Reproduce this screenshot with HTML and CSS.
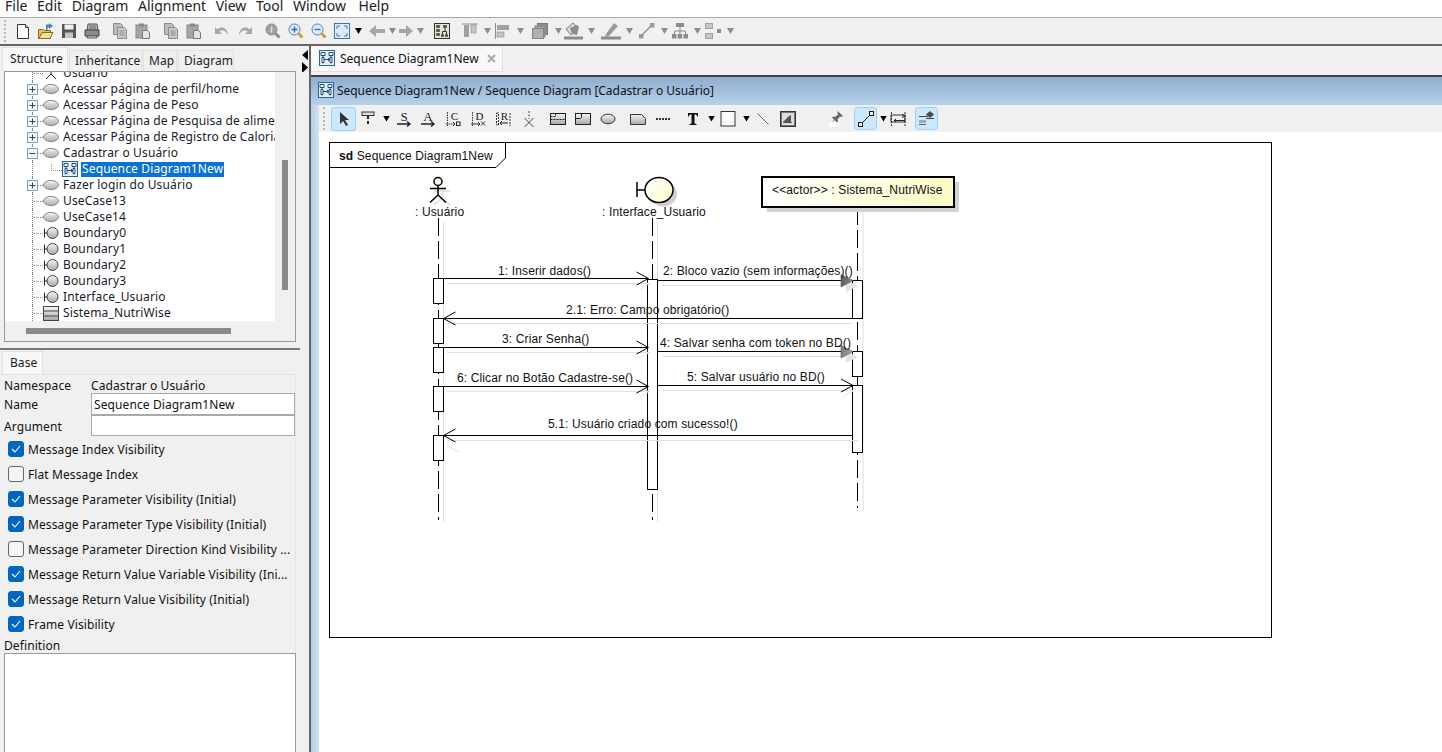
FILE: index.html
```html
<!DOCTYPE html>
<html lang="pt">
<head>
<meta charset="utf-8">
<title>Sequence Diagram1New</title>
<link rel="stylesheet" href="styles.css">
</head>
<body>
<svg class="defs" width="0" height="0">
  <defs>
    <linearGradient id="ug" x1="0" y1="0" x2="0" y2="1"><stop offset="0" stop-color="#f4f4f4"/><stop offset="1" stop-color="#a8a8a8"/></linearGradient>
    <linearGradient id="yel" x1="0" y1="0" x2="1" y2="1"><stop offset="0" stop-color="#ffffff"/><stop offset="1" stop-color="#fbfbc8"/></linearGradient>
    <linearGradient id="yb" x1="0" y1="0" x2="1" y2="0"><stop offset="0" stop-color="#ffffff"/><stop offset="1" stop-color="#fbfbc4"/></linearGradient>
    <linearGradient id="gr" x1="0" y1="0" x2="1" y2="1"><stop offset="0" stop-color="#5c5c5c"/><stop offset="1" stop-color="#a8a8a8"/></linearGradient>
    <symbol id="seq" viewBox="0 0 16 16">
      <rect x=".5" y=".5" width="15" height="15" fill="#e6eff8" stroke="#2d6396"/>
      <path d="M2 2.500h4v3H2zM10 2.500h4v3h-4z" fill="#fff" stroke="#1c4f80"/>
      <path d="M4 5.500v8M12 5.500v8" stroke="#1c4f80"/>
      <path d="M3 7.500h2v5H3zM11 7.500h2v5h-2z" fill="#fff" stroke="#1c4f80"/>
      <path d="M5 9.500h6M9 8l2 1.500L9 11" fill="none" stroke="#1c4f80"/>
    </symbol>
    <symbol id="uc" viewBox="0 0 16 16">
      <ellipse cx="8" cy="8" rx="7.500" ry="4.600" fill="url(#ug)" stroke="#8a8a8a"/>
    </symbol>
    <symbol id="bd" viewBox="0 0 16 16">
      <circle cx="9.500" cy="8" r="5.500" fill="url(#ug)" stroke="#444"/>
      <path d="M1.500 3.500v9M1.500 8H4" stroke="#222" fill="none"/>
    </symbol>
    <symbol id="cl" viewBox="0 0 16 16">
      <rect x=".5" y="1.500" width="15" height="14" fill="url(#ug)" stroke="#444"/>
      <path d="M.5 6h15M.5 11h15" stroke="#444"/>
    </symbol>
    <symbol id="pl" viewBox="0 0 11 11">
      <rect x=".5" y=".5" width="10" height="10" fill="#f2f6fb" stroke="#8aa0bd"/>
      <path d="M2.500 5.500h6M5.500 2.500v6" stroke="#27457a"/>
    </symbol>
    <symbol id="mi" viewBox="0 0 11 11">
      <rect x=".5" y=".5" width="10" height="10" fill="#f2f6fb" stroke="#8aa0bd"/>
      <path d="M2.500 5.500h6" stroke="#27457a"/>
    </symbol>
    <symbol id="pg" viewBox="0 0 16 16">
      <path d="M1.500 .5h7l2 2v9h-9z" fill="#bdbdbd" stroke="#8c8c8c"/>
      <path d="M5.500 4.500h7l2 2v9h-9z" fill="#c8c8c8" stroke="#8c8c8c"/>
      <path d="M7.500 8h5M7.500 10h5M7.500 12h5" stroke="#8c8c8c"/>
    </symbol>
    <symbol id="pt" viewBox="0 0 16 16">
      <rect x="1" y="2" width="11" height="13" fill="#a9a4a0" stroke="#8a8580"/>
      <rect x="4" y=".5" width="5" height="3" fill="#8a8580"/>
      <path d="M7.500 7.500h5l2 2v6h-7z" fill="#e4e4e4" stroke="#777"/>
    </symbol>
  </defs>
</svg>

<div class="app">
  <nav class="menu">
    <span>File</span><span>Edit</span><span>Diagram</span><span>Alignment</span><span>View</span><span>Tool</span><span>Window</span><span>Help</span>
  </nav>

  <div class="toolbar">
    <span class="grip m4"></span>
    <svg class="i m9" width="16" height="16" viewBox="0 0 16 16"><path d="M2.500 1.500h8l3 3v11h-11z" fill="#fdfdfd" stroke="#333"/><path d="M10.500 1.500v3h3" fill="#ddd" stroke="#333"/></svg>
    <svg class="i m7" width="16" height="16" viewBox="0 0 16 16"><path d="M.5 6.500h5l1 1h6v8H.5z" fill="#e8c35a" stroke="#8a6a1a"/><path d="M1 15.500l3-6h11l-3 6z" fill="#f6df8e" stroke="#8a6a1a"/><path d="M8 1.500h3V0l4 3-4 3V4.500H9.500V7H8z" fill="#3d85c6"/></svg>
    <svg class="i m7" width="16" height="16" viewBox="0 0 16 16"><rect x="1" y="1" width="14" height="14" fill="#555"/><rect x="3.500" y="1.500" width="9" height="5" fill="#f0f0f0"/><rect x="4" y="9.500" width="8" height="5.500" fill="#c4c4c4"/></svg>
    <svg class="i m7" width="16" height="16" viewBox="0 0 16 16"><path d="M4 1h9l1 6H3z" fill="#bbb" stroke="#555"/><path d="M1 7h14v6H1z" fill="#8a8a8a" stroke="#444"/><path d="M3 13h10v2H3z" fill="#ddd" stroke="#555"/><path d="M5 3h7M5 5h7" stroke="#666"/></svg>
    <svg class="i m12" width="16" height="16"><use href="#pg"/></svg>
    <svg class="i m7" width="16" height="16"><use href="#pt"/></svg>
    <svg class="i m12" width="16" height="16"><use href="#pg"/></svg>
    <svg class="i m7" width="16" height="16"><use href="#pt"/></svg>
    <svg class="i m12" width="16" height="16" viewBox="0 0 16 16"><path d="M1 4v7h7L5.500 8.500C8 6 11.500 7 14 12c0-6-6-10-10.500-5.500z" fill="#a6a6a6"/></svg>
    <svg class="i m7" width="16" height="16" viewBox="0 0 16 16"><path d="M15 4v7H8l2.500-2.500C8 6 4.500 7 2 12 2 6 8 2 12.500 6.500z" fill="#a6a6a6"/></svg>
    <svg class="i m12" width="16" height="16" viewBox="0 0 16 16"><circle cx="6.500" cy="6.500" r="5.500" fill="#a0a0a0" stroke="#8a8a8a"/><path d="M10.500 10.500l4 4" stroke="#8a8a8a" stroke-width="3"/><path d="M6.500 3.500v6" stroke="#dcdcdc" stroke-width="1.500"/></svg>
    <svg class="i m7" width="16" height="16" viewBox="0 0 16 16"><circle cx="6.500" cy="6.500" r="5.500" fill="#dcecfb" stroke="#5680b0"/><path d="M3.500 6.500h6M6.500 3.500v6" stroke="#2d6aa8" stroke-width="1.300"/><path d="M10.500 10.500l4 4" stroke="#d99a2b" stroke-width="3"/></svg>
    <svg class="i m7" width="16" height="16" viewBox="0 0 16 16"><circle cx="6.500" cy="6.500" r="5.500" fill="#dcecfb" stroke="#5680b0"/><path d="M3.500 6.500h6" stroke="#2d6aa8" stroke-width="1.300"/><path d="M10.500 10.500l4 4" stroke="#d99a2b" stroke-width="3"/></svg>
    <svg class="i m7" width="16" height="16" viewBox="0 0 16 16"><rect x=".5" y=".5" width="15" height="15" fill="#dcecfb" stroke="#3a78b5"/><path d="M3 6V3h3M10 3h3v3M13 10v3h-3M6 13H3v-3" fill="none" stroke="#3a78b5"/></svg>
    <span class="dr m5"></span>
    <svg class="i m6" width="18" height="16" viewBox="0 0 18 16"><path d="M1 8l7-6v4h9v4H8v4z" fill="#a6a6a6"/></svg>
    <span class="dr gy m3"></span>
    <svg class="i m2" width="16" height="16" viewBox="0 0 16 16"><path d="M15 8L8 2v4H1v4h7v4z" fill="#a6a6a6"/></svg>
    <span class="dr gy m3"></span>
    <svg class="i m10" width="16" height="16" viewBox="0 0 16 16"><rect x=".5" y=".5" width="15" height="15" fill="#e8e2d4" stroke="#333"/><path d="M2.500 2.500h3v2h-3zM2.500 6.500h3v2h-3zM2.500 10.500h3v2h-3zM9.500 2.500h3v2h-3zM7.500 11.500h2v2h-2zM11.500 11.500h2v2h-2z" fill="#555" stroke="#333" stroke-width=".6"/><path d="M11 5v3M8.500 11V8.500h4V11" fill="none" stroke="#333"/></svg>
    <svg class="i m12" width="16" height="16" viewBox="0 0 16 16"><path d="M0 1h16" stroke="#8c8c8c"/><rect x="2" y="2" width="5" height="12" fill="#a0a0a0"/><rect x="9" y="2" width="5" height="8" fill="#c4c4c4" stroke="#8c8c8c" stroke-width=".6"/></svg>
    <span class="dr gy m6"></span>
    <svg class="i m3" width="16" height="16" viewBox="0 0 16 16"><path d="M1.500 0v16" stroke="#8c8c8c"/><rect x="3" y="2" width="12" height="5" fill="#a0a0a0"/><rect x="3" y="9" width="7" height="5" fill="#c4c4c4" stroke="#8c8c8c" stroke-width=".6"/></svg>
    <span class="dr gy m7"></span>
    <svg class="i m8" width="16" height="16" viewBox="0 0 16 16"><rect x="5.500" y=".5" width="10" height="11" fill="#8e8e8e" stroke="#7a7a7a"/><rect x="3" y="3" width="10" height="11" fill="#a0a0a0" stroke="#858585"/><rect x=".5" y="5.500" width="11" height="10" fill="#b0b0b0" stroke="#858585"/></svg>
    <span class="dr gy m7"></span>
    <svg class="i m1" width="20" height="18" viewBox="0 0 20 18"><path d="M3 7l7-6 5 5-7 7z" fill="#d8d8d8" stroke="#7a7a7a"/><path d="M7 6l7-3 2 2-2 8-5-1z" fill="#8c8c8c"/><path d="M1 16h19" stroke="#8c8c8c" stroke-width="3"/></svg>
    <span class="dr gy m5"></span>
    <svg class="i m6" width="20" height="18" viewBox="0 0 20 18"><path d="M5 12L13 1l4 3-9 10-4 1z" fill="#9a9a9a"/><path d="M0 16h20" stroke="#8c8c8c" stroke-width="3"/></svg>
    <span class="dr gy m5"></span>
    <svg class="i m6" width="16" height="16" viewBox="0 0 16 16"><rect x="0" y="11" width="4.500" height="4.500" fill="#9a9a9a"/><rect x="11" y="0" width="4.500" height="4.500" fill="#9a9a9a"/><path d="M3 12L12 3" stroke="#8c8c8c" stroke-width="1.300"/></svg>
    <span class="dr gy m6"></span>
    <svg class="i m4" width="16" height="16" viewBox="0 0 16 16"><rect x="4" y="0" width="8" height="4" fill="#8c8c8c"/><path d="M8 4v4M2.500 11V8h11v3M8 8v3" fill="none" stroke="#8c8c8c"/><rect x="0" y="11" width="4.500" height="4.500" fill="#8c8c8c"/><rect x="5.700" y="11" width="4.500" height="4.500" fill="#8c8c8c"/><rect x="11.500" y="11" width="4.500" height="4.500" fill="#8c8c8c"/></svg>
    <span class="dr gy m6"></span>
    <svg class="i m4" width="16" height="16" viewBox="0 0 16 16"><rect x="0" y="0" width="8" height="6" fill="#a0a0a0"/><path d="M1 2h6M1 4h6" stroke="#eee"/><rect x="0" y="10" width="8" height="6" fill="#a0a0a0"/><path d="M1 12h6M1 14h6" stroke="#eee"/><rect x="12" y="6" width="4" height="4" fill="#8c8c8c"/></svg>
    <span class="dr gy m6"></span>
  </div>

  <div class="main">
    <aside class="left">
      <div class="tabs">
        <span class="tab on">Structure</span><span class="tab">Inheritance</span><span class="tab">Map</span><span class="tab">Diagram</span>
      </div>
      <div class="treebox">
        <div class="tree">
          <div class="row"><svg class="ti" width="16" height="16" viewBox="0 0 16 16"><path d="M8 0v9M3 14l5-5 5 5" fill="none" stroke="#222"/></svg><span>Usuário</span></div>
          <div class="row"><svg class="ex" width="11" height="11"><use href="#pl"/></svg><svg class="ti" width="16" height="16"><use href="#uc"/></svg><span>Acessar página de perfil/home</span></div>
          <div class="row"><svg class="ex" width="11" height="11"><use href="#pl"/></svg><svg class="ti" width="16" height="16"><use href="#uc"/></svg><span>Acessar Página de Peso</span></div>
          <div class="row"><svg class="ex" width="11" height="11"><use href="#pl"/></svg><svg class="ti" width="16" height="16"><use href="#uc"/></svg><span>Acessar Página de Pesquisa de alimentos</span></div>
          <div class="row"><svg class="ex" width="11" height="11"><use href="#pl"/></svg><svg class="ti" width="16" height="16"><use href="#uc"/></svg><span>Acessar Página de Registro de Calorias</span></div>
          <div class="row"><svg class="ex" width="11" height="11"><use href="#mi"/></svg><svg class="ti" width="16" height="16"><use href="#uc"/></svg><span>Cadastrar o Usuário</span></div>
          <div class="row sub"><svg class="ti" width="16" height="16"><use href="#seq"/></svg><span class="sel">Sequence Diagram1New</span></div>
          <div class="row"><svg class="ex" width="11" height="11"><use href="#pl"/></svg><svg class="ti" width="16" height="16"><use href="#uc"/></svg><span>Fazer login do Usuário</span></div>
          <div class="row"><svg class="ti" width="16" height="16"><use href="#uc"/></svg><span>UseCase13</span></div>
          <div class="row"><svg class="ti" width="16" height="16"><use href="#uc"/></svg><span>UseCase14</span></div>
          <div class="row"><svg class="ti" width="16" height="16"><use href="#bd"/></svg><span>Boundary0</span></div>
          <div class="row"><svg class="ti" width="16" height="16"><use href="#bd"/></svg><span>Boundary1</span></div>
          <div class="row"><svg class="ti" width="16" height="16"><use href="#bd"/></svg><span>Boundary2</span></div>
          <div class="row"><svg class="ti" width="16" height="16"><use href="#bd"/></svg><span>Boundary3</span></div>
          <div class="row"><svg class="ti" width="16" height="16"><use href="#bd"/></svg><span>Interface_Usuario</span></div>
          <div class="row"><svg class="ti" width="16" height="16"><use href="#cl"/></svg><span>Sistema_NutriWise</span></div>
        </div>
        <div class="vthumb"></div>
        <div class="hthumb"></div>
      </div>

      <div class="hsplit"></div>

      <div class="tabs base"><span class="tab on">Base</span></div>
      <div class="props">
        <div class="prop first"><label>Namespace</label><span>Cadastrar o Usuário</span></div>
        <div class="prop"><label>Name</label><span class="field">Sequence Diagram1New</span></div>
        <div class="prop"><label>Argument</label><span class="field"></span></div>
        <div class="checks">
          <div class="ck"><span class="box on"><svg width="10" height="8" viewBox="0 0 10 8"><path d="M1 4l3 3 5-6" fill="none" stroke="#fff" stroke-width="1.100"/></svg></span>Message Index Visibility</div>
          <div class="ck"><span class="box"></span>Flat Message Index</div>
          <div class="ck"><span class="box on"><svg width="10" height="8" viewBox="0 0 10 8"><path d="M1 4l3 3 5-6" fill="none" stroke="#fff" stroke-width="1.100"/></svg></span>Message Parameter Visibility (Initial)</div>
          <div class="ck"><span class="box on"><svg width="10" height="8" viewBox="0 0 10 8"><path d="M1 4l3 3 5-6" fill="none" stroke="#fff" stroke-width="1.100"/></svg></span>Message Parameter Type Visibility (Initial)</div>
          <div class="ck"><span class="box"></span>Message Parameter Direction Kind Visibility ...</div>
          <div class="ck"><span class="box on"><svg width="10" height="8" viewBox="0 0 10 8"><path d="M1 4l3 3 5-6" fill="none" stroke="#fff" stroke-width="1.100"/></svg></span>Message Return Value Variable Visibility (Ini...</div>
          <div class="ck"><span class="box on"><svg width="10" height="8" viewBox="0 0 10 8"><path d="M1 4l3 3 5-6" fill="none" stroke="#fff" stroke-width="1.100"/></svg></span>Message Return Value Visibility (Initial)</div>
          <div class="ck"><span class="box on"><svg width="10" height="8" viewBox="0 0 10 8"><path d="M1 4l3 3 5-6" fill="none" stroke="#fff" stroke-width="1.100"/></svg></span>Frame Visibility</div>
        </div>
        <div class="deflabel">Definition</div>
        <div class="defbox"></div>
      </div>
    </aside>

    <div class="gutter">
      <svg width="7" height="24" viewBox="0 0 7 24"><path d="M7 2v10L1 7zM1 14v11l6-5.500z" fill="#000"/></svg>
    </div>

    <section class="right">
      <div class="dtabs">
        <div class="dtab">
          <svg width="16" height="16"><use href="#seq"/></svg>
          <span>Sequence Diagram1New</span>
          <svg class="close" width="9" height="9" viewBox="0 0 9 9"><path d="M1 1l7 7M8 1L1 8" stroke="#a8a8a8" stroke-width="1.800"/></svg>
        </div>
      </div>
      <div class="dtitle">
        <svg width="16" height="16"><use href="#seq"/></svg>
        <span>Sequence Diagram1New / Sequence Diagram [Cadastrar o Usuário]</span>
      </div>
      <div class="dbody">
        <div class="strip"></div>
        <div class="dcol">
          <div class="dtools">
            <span class="grip short m4"></span>
            <span class="btn big m6"><svg width="12" height="16" viewBox="0 0 12 16"><path d="M2 1v12l3-3 3 5 2-1-3-5h4z" fill="#333"/></svg></span>
            <svg class="i m4" width="16" height="16" viewBox="0 0 16 16"><rect x="2" y="1" width="12" height="3.500" fill="#ddd" stroke="#333"/><path d="M8 5v9" stroke="#222" stroke-width="2" stroke-dasharray="3 2"/></svg>
            <span class="dr m7"></span>
            <svg class="i m6" width="16" height="16" viewBox="0 0 16 16"><text x="8" y="9.500" class="gl" text-anchor="middle">S</text><path d="M1 13h13M11 10.500l3 2.500-3 2.500" fill="none" stroke="#222" stroke-width="1.400"/></svg>
            <svg class="i m8" width="16" height="16" viewBox="0 0 16 16"><text x="8" y="9.500" class="gl" text-anchor="middle">A</text><path d="M1 13h13M11 10.500l3 2.500-3 2.500" fill="none" stroke="#222" stroke-width="1.400"/></svg>
            <svg class="i m9" width="16" height="16" viewBox="0 0 16 16"><text x="9.500" y="8.500" class="gl sm" text-anchor="middle">C</text><path d="M2.500 1v14M1 13h9" fill="none" stroke="#333" stroke-dasharray="1.500 1"/><path d="M8 11l2 2-2 2" fill="none" stroke="#222"/><rect x="11.500" y="11" width="3.500" height="3.500" fill="none" stroke="#222"/></svg>
            <svg class="i m9" width="16" height="16" viewBox="0 0 16 16"><text x="9.500" y="8.500" class="gl sm" text-anchor="middle">D</text><path d="M2.500 1v14" fill="none" stroke="#333" stroke-dasharray="1.500 1"/><path d="M1 13h9M8 11l2 2-2 2" fill="none" stroke="#333"/><path d="M11 10.500l4 4M15 10.500l-4 4" stroke="#333"/></svg>
            <svg class="i m9" width="16" height="16" viewBox="0 0 16 16"><text x="9.500" y="8.500" class="gl sm" text-anchor="middle">R</text><path d="M1.500 2h2v12h-2zM15 2v13" fill="none" stroke="#333" stroke-dasharray="2 1"/><path d="M13 12H5M7 10l-2 2 2 2" fill="none" stroke="#222"/></svg>
            <svg class="i m10" width="16" height="16" viewBox="0 0 16 16"><path d="M8 0v8" stroke="#444" stroke-dasharray="2 1.500"/><path d="M3.500 7l9 9M12.500 7l-9 9" stroke="#444"/></svg>
            <svg class="i m13" width="16" height="16" viewBox="0 0 16 16"><rect x=".5" y="2.500" width="15" height="11" fill="url(#ug)" stroke="#222"/><path d="M5.500 2.500v3H.5M.5 8.500h15" fill="none" stroke="#222" stroke-dasharray="2 1"/></svg>
            <svg class="i m9" width="16" height="16" viewBox="0 0 16 16"><rect x=".5" y="2.500" width="15" height="11" fill="url(#ug)" stroke="#222"/><path d="M6.500 2.500v4l-1 1H.5" fill="none" stroke="#222"/></svg>
            <svg class="i m9" width="16" height="16" viewBox="0 0 16 16"><ellipse cx="8" cy="8" rx="7" ry="4.800" fill="url(#ug)" stroke="#333"/></svg>
            <svg class="i m14" width="16" height="16" viewBox="0 0 16 16"><path d="M.5 3.500h11l4 4v6H.5z" fill="url(#ug)" stroke="#333"/></svg>
            <svg class="i m9" width="16" height="16" viewBox="0 0 16 16"><path d="M1 8h14" stroke="#333" stroke-width="2" stroke-dasharray="2 1"/></svg>
            <svg class="i m14" width="16" height="16" viewBox="0 0 16 16"><path d="M3 2h10v3.500h-1C12 4 11.500 3.500 9.500 3.500v9l2 .5v1H4.500v-1l2-.5v-9C4.500 3.500 4 4 4 5.500H3z" fill="#111"/></svg>
            <span class="dr m7"></span>
            <svg class="i m5" width="16" height="16" viewBox="0 0 16 16"><rect x="1" y=".5" width="14" height="14.500" fill="#fafafa" stroke="#333"/></svg>
            <span class="dr m7"></span>
            <svg class="i m5" width="16" height="16" viewBox="0 0 16 16"><path d="M2.500 2.500l11 11" stroke="#666"/></svg>
            <svg class="i m9" width="16" height="16" viewBox="0 0 16 16"><rect x=".5" y=".5" width="15" height="15" fill="#777" stroke="#333"/><rect x="2" y="2" width="12" height="12" fill="#ddd"/><path d="M3 11l6-6 2-1v7z" fill="#555"/><path d="M3 11.500h9" stroke="#555"/></svg>
            <svg class="i m32" width="16" height="16" viewBox="0 0 16 16"><rect x="1.500" y="11.500" width="9" height="4" fill="#fafafa" stroke="#fff"/><path d="M9.500 0l5.500 5-1.500 1-1.500-.5-2.500 3 .5 2-1 1-2.500-2.500-3 3 2.500-3.500-2-2 1-1 2 .5 3-2.500-.5-1.500z" fill="#666"/></svg>
            <span class="btn wide m10"><svg width="16" height="16" viewBox="0 0 16 16"><rect x=".5" y="11.500" width="4" height="4" fill="#eaf4fd" stroke="#222"/><rect x="11.500" y=".5" width="4" height="4" fill="#eaf4fd" stroke="#222"/><path d="M4 12l8-8" stroke="#222"/></svg></span>
            <span class="dr m3"></span>
            <svg class="i m3" width="16" height="16" viewBox="0 0 16 16"><path d="M1.500 1v14M15 1v14" stroke="#333" stroke-dasharray="2 1"/><rect x="1" y="4" width="14" height="7" fill="none" stroke="#333"/><path d="M12 3.500l3 1.500-3 1.500M15 9.500H4M6 8l-2 1.500L6 11" fill="none" stroke="#222"/></svg>
            <span class="btn wide m9"><svg width="16" height="16" viewBox="0 0 16 16"><path d="M11 0l4 3.500-4 3.500-4-3.500z" fill="#4a4a4a"/><path d="M0 5.500h9M7 7.500h8" stroke="#444"/><rect x="0" y="9" width="7" height="3" fill="#aaa"/><path d="M0 13.500h7" stroke="#666"/></svg></span>
          </div>
          <div class="canvas">
            <svg class="diagram" width="1123" height="620" viewBox="319 132 1123 620">
              <!-- frame -->
              <rect x="329.500" y="142.500" width="942" height="495" fill="#fff" stroke="#000"/>
              <path d="M329.500 167.500H496L505.500 158V142.500" fill="none" stroke="#000"/>
              <text x="339" y="160" class="dt"><tspan class="sd">sd</tspan> Sequence Diagram1New</text>

              <!-- lifeline shadows -->
              <path d="M443.500 222V522M657.500 222V522M863 210V511" class="shl"/>

              <!-- lifelines -->
              <path d="M438.500 218V520M652.500 218V520M857.500 207V508" class="life"/>

              <!-- actor -->
              <g transform="translate(4 3)">
                <path d="M430 188h16M438 186v9l-8 7M438 195l8 7" fill="none" stroke="#ddd" stroke-width="1.500"/>
              </g>
              <circle cx="438" cy="181.500" r="4" fill="#fbfbe0" stroke="#000" stroke-width="1.500"/>
              <path d="M430 188.500h16M438 185.500v9.500l-8 7.500M438 195l8 7.500" fill="none" stroke="#000" stroke-width="1.500"/>
              <text x="415" y="215.500" class="dt">: Usuário</text>

              <!-- boundary -->
              <ellipse cx="663" cy="194" rx="14" ry="12.500" fill="#cfcfcf"/>
              <ellipse cx="659" cy="190" rx="14" ry="12.500" fill="url(#yel)" stroke="#000" stroke-width="1.500"/>
              <path d="M637 182v15M637 190h8" fill="none" stroke="#000" stroke-width="1.500"/>
              <text x="602" y="215.500" class="dt">: Interface_Usuario</text>

              <!-- system box -->
              <rect x="767" y="182" width="192" height="30" fill="#d2d2d2"/>
              <rect x="762" y="177" width="192" height="30" fill="url(#yb)" stroke="#000" stroke-width="2"/>
              <text x="772" y="194" class="dt">&lt;&lt;actor&gt;&gt; : Sistema_NutriWise</text>

              <!-- activations -->
              <rect x="433.500" y="278.500" width="10" height="25" class="act"/>
              <rect x="433.500" y="318.500" width="10" height="25" class="act"/>
              <rect x="433.500" y="347.500" width="10" height="25" class="act"/>
              <rect x="433.500" y="386.500" width="10" height="25" class="act"/>
              <rect x="433.500" y="435.500" width="10" height="25" class="act"/>
              <rect x="647.500" y="279.500" width="10" height="210" class="act"/>
              <rect x="852.500" y="280.500" width="10" height="38" class="act"/>
              <rect x="852.500" y="351.500" width="10" height="25" class="act"/>
              <rect x="852.500" y="385.500" width="10" height="67" class="act"/>

              <!-- message shadows -->
              <path d="M447 283.500H650M662 285.500H853M447 323.500H852M447 352.500H650M662 356.500H852M447 391.500H650M662 390.500H853M447 440.500H858" class="shm"/>
              <path d="M640 289l9-5-9-5M447 328l9-5-9-5M640 358l9-5-9-5M640 397l9-5-9-5M844 396l9-5-9-5M447 446l12 6" class="sha"/>
              <path d="M846 280l12 6-12 6zM846 351l12 6-12 6z" fill="#e4e4e4"/>

              <!-- messages -->
              <path d="M443.500 278.500H648M657.500 280.500H852M443.500 318.500H852M443.500 347.500H648M657.500 351.500H852M443.500 386.500H648M657.500 385.500H852M443.500 435.500H852" class="msg"/>
              <path d="M636.500 272l12 6.500-12 6.500M455.500 312l-12 6.500 12 6.500M636.500 341l12 6.500-12 6.500M636.500 380l12 6.500-12 6.500M841 379l12 6.500-12 6.500M455.500 429l-12 6.500 12 6.500" class="open"/>
              <path d="M841 274.500l12 6-12 6.500zM841 345.500l12 6-12 6.500z" fill="url(#gr)" stroke="#555" stroke-width=".6"/>

              <text x="498" y="275" class="dt">1: Inserir dados()</text>
              <text x="663" y="275" class="dt">2: Bloco vazio (sem informações)()</text>
              <text x="566" y="314" class="dt">2.1: Erro: Campo obrigatório()</text>
              <text x="502" y="343" class="dt">3: Criar Senha()</text>
              <text x="660" y="347" class="dt">4: Salvar senha com token no BD()</text>
              <text x="457" y="382" class="dt">6: Clicar no Botão Cadastre-se()</text>
              <text x="687" y="381" class="dt">5: Salvar usuário no BD()</text>
              <text x="548" y="428" class="dt">5.1: Usuário criado com sucesso!()</text>
            </svg>
          </div>
        </div>
      </div>
    </section>
  </div>
</div>
</body>
</html>
```
FILE: styles.css
```css
* { box-sizing: border-box; }
html, body { margin: 0; padding: 0; background: #fff; }
body { font-family: "Noto Sans", "Liberation Sans", sans-serif; font-size: 12px; color: #111; overflow: hidden; }
.defs { position: absolute; }
.app { width: 1442px; height: 752px; display: flex; flex-direction: column; overflow: hidden; }

.menu { height: 18px; flex: none; display: flex; gap: 9.600px; padding-left: 5px; background: #fff; border-bottom: 1px solid #a8a8a8; font-size: 14px; line-height: 12px; color: #222; }
.menu span:last-child { margin-left: 3px; }

.toolbar { height: 28px; display: flex; align-items: center; background: #f0f0f0; border-bottom: 2px solid #666; flex: none; }
.i { flex: none; display: block; }
.dr { flex: none; width: 7px; height: 6px; background: #000; clip-path: polygon(0 0, 100% 0, 50% 100%); }
.dr.gy { background: #8c8c8c; }
.grip { flex: none; width: 2px; height: 22px; border-left: 2px dotted #b8b8b8; }
.grip.short { height: 23px; }
.m1 { margin-left: 1px; } .m2 { margin-left: 2px; } .m3 { margin-left: 3px; } .m4 { margin-left: 4px; }
.m5 { margin-left: 5px; } .m6 { margin-left: 6px; } .m7 { margin-left: 7px; } .m8 { margin-left: 8px; }
.m9 { margin-left: 9px; } .m10 { margin-left: 10px; } .m12 { margin-left: 12px; }
.m13 { margin-left: 13px; } .m14 { margin-left: 14px; } .m32 { margin-left: 32px; }

.main { flex: 1; display: flex; min-height: 0; }
.left { width: 300px; flex: none; background: #f0f0f0; display: flex; flex-direction: column; }
.gutter { width: 9px; flex: none; background: #f0f0f0; padding: 2px 0 0 1px; }
.gutter svg { display: block; }

.tabs { height: 25px; display: flex; align-items: flex-end; padding-left: 2px; flex: none; }
.tab { height: 21px; padding: 0 6px; line-height: 19px; background: #f0f0f0; border: 1px solid #e0e0e0; border-bottom: 0; margin-right: 1px; color: #222; letter-spacing: .05px; }
.tab:nth-child(2) { width: 73px; padding-left: 5px; }
.tab:nth-child(3) { width: 34px; padding-left: 5px; }
.tab:nth-child(4) { width: 56px; padding-left: 5px; }
.tab.on { height: 24px; width: 66px; padding-left: 7px; line-height: 21px; background: #f8f8f8; }

.treebox { position: relative; margin: 0 4px; height: 271px; border: 1px solid #999; background: #f0f0f0; flex: none; }
.tree { width: 270px; height: 249px; background: #fff; overflow: hidden; display: flex; flex-direction: column; white-space: nowrap; letter-spacing: .14px; }
.row { height: 16px; flex: none; display: flex; align-items: center; padding-left: 38px; line-height: 16px; position: relative; color: #1a1a2a; }
.row:first-child { margin-top: -7px; }
.row::before { content: ""; position: absolute; left: 27px; top: 0; bottom: 0; border-left: 1px dotted #888; }
.row::after { content: ""; position: absolute; left: 28px; width: 10px; top: 8px; border-top: 1px dotted #888; }
.row.sub { padding-left: 57px; }
.row.sub::after { left: 46px; top: 3px; width: 10px; height: 6px; border-left: 1px dotted #888; border-bottom: 1px dotted #888; border-top: 0; }
.ex { position: absolute; left: 22px; top: 3px; z-index: 1; }
.ti { flex: none; margin-right: 4px; position: relative; z-index: 1; display: block; background: #fff; }
.sel { background: #0a72d4; color: #fff; padding: 0 1px; margin-left: -1px; height: 15px; line-height: 14px; }
.vthumb { position: absolute; left: 277px; top: 88px; width: 6px; height: 130px; background: #8a8a8a; }
.hthumb { position: absolute; left: 21px; top: 256px; width: 205px; height: 6px; background: #8a8a8a; }

.hsplit { height: 2px; margin-top: 6px; background: #777; flex: none; }
.tabs.base { height: 24px; }
.tabs.base .tab.on { width: 41px; height: 23px; line-height: 21px; padding-left: 7px; }

.props { flex: 1; min-height: 0; padding-left: 4px; width: 296px; border-top: 1px solid #e4e4e4; border-right: 1px solid #e4e4e4; display: flex; flex-direction: column; letter-spacing: .1px; }
.prop { display: flex; height: 21.500px; align-items: center; flex: none; }
.prop label { width: 87px; flex: none; padding-top: 2px; }
.prop.first { height: 18px; padding-top: 2px; }
.prop.first label { padding-top: 0; }
.field { width: 205px; height: 100%; background: #fff; border: 1px solid #aaa; padding-left: 2px; line-height: 22px; }
.checks { flex: none; padding-top: .5px; }
.ck { height: 25px; display: flex; align-items: center; padding-left: 4px; white-space: nowrap; }
.box { width: 16px; height: 16px; margin-right: 4px; flex: none; border-radius: 3px; border: 1px solid #666; background: #f5f5f5; display: flex; align-items: center; justify-content: center; }
.box.on { background: #0067c0; border-color: #0067c0; }
.deflabel { height: 16px; line-height: 18px; flex: none; }
.defbox { flex: 1; background: #fff; border: 1px solid #999; border-bottom: 0; width: 292px; }

.right { flex: 1; min-width: 0; display: flex; flex-direction: column; border-left: 2px solid #666; background: #f0f0f0; }
.dtabs { height: 31px; padding-top: 1px; flex: none; border-bottom: 2px solid #444; background: #f0f0f0; }
.dtab { width: 192px; height: 25px; display: flex; align-items: center; padding: 0 0 2px 8px; gap: 5px; background: #f8f8f8; border-right: 1px solid #e0e0e0; border-bottom: 1px solid #e0e0e0; }
.dtab svg { flex: none; display: block; }
.dtab .close { margin-left: 3px; }
.dtitle { height: 28px; flex: none; display: flex; align-items: center; gap: 3px; padding: 0 0 2px 7px; background: linear-gradient(#90adce, #b6d1eb); color: #111; letter-spacing: -.04px; }
.dtitle svg { display: block; flex: none; }
.dbody { flex: 1; min-height: 0; display: flex; }
.strip { width: 8px; flex: none; background: linear-gradient(90deg, #b4cde6, #d2e3f3); }
.dcol { flex: 1; min-width: 0; display: flex; flex-direction: column; }
.dtools { height: 27px; flex: none; display: flex; align-items: center; background: #f0f0f0; }
.btn { flex: none; display: flex; align-items: center; justify-content: center; background: #cce8ff; border: 1px solid #99d1ff; border-radius: 3px; }
.btn.big { width: 25px; height: 24px; }
.btn.wide { width: 23px; height: 23px; }
.canvas { flex: 1; min-height: 0; background: #fff; overflow: hidden; }
.diagram { display: block; }
.gl { font-family: "Liberation Serif", serif; font-size: 13px; fill: #222; }
.gl.sm { font-size: 11px; }
.dt { font-family: "Liberation Sans", Arial, sans-serif; font-size: 12px; fill: #111; letter-spacing: .13px; }
.sd { font-weight: 700; }
.life { stroke: #000; stroke-width: 1; stroke-dasharray: 18 5; fill: none; }
.shl { stroke: #dedede; stroke-width: 1; fill: none; }
.act { fill: #fff; stroke: #000; }
.msg { stroke: #000; fill: none; }
.open { stroke: #000; fill: none; }
.shm { stroke: #e0e0e0; fill: none; }
.sha { stroke: #e4e4e4; fill: none; }
```
